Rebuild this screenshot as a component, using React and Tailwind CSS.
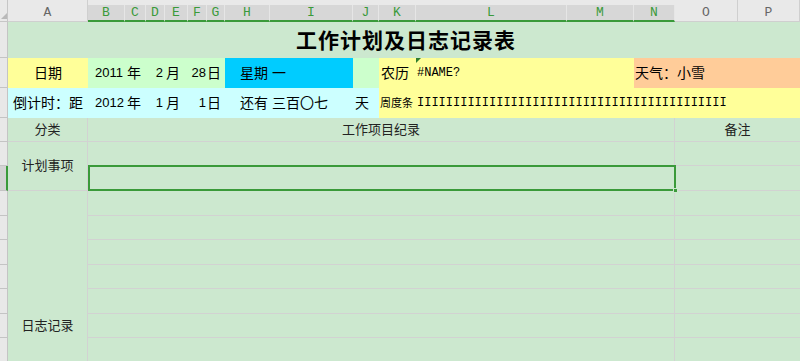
const headers = [
  { k: "A", w: "w-[80px]", sel: false },
  { k: "B", w: "w-[37px]", sel: true },
  { k: "C", w: "w-[21px]", sel: true },
  { k: "D", w: "w-[19px]", sel: true },
  { k: "E", w: "w-[23px]", sel: true },
  { k: "F", w: "w-[19px]", sel: true },
  { k: "G", w: "w-[18px]", sel: true },
  { k: "H", w: "w-[45px]", sel: true },
  { k: "I", w: "w-[83px]", sel: true },
  { k: "J", w: "w-[26px]", sel: true },
  { k: "K", w: "w-[37px]", sel: true },
  { k: "L", w: "w-[151px]", sel: true },
  { k: "M", w: "w-[67px]", sel: true },
  { k: "N", w: "w-[41px]", sel: true },
  { k: "O", w: "w-[63px]", sel: false },
  { k: "P", w: "w-[62px]", sel: false },
];

// row heights of the grey row-number strip (after the column header)
const stripRows = [
  "h-[36px]", "h-[30px]", "h-[30px]", "h-[24px]", "h-[24px]", "h-[25px]",
  "h-[25px]", "h-[24px]", "h-[25px]", "h-[24px]", "h-[25px]", "h-[24px]", "h-[24px]",
];

const logRows = ["h-[25px]", "h-[24px]", "h-[25px]", "h-[24px]", "h-[25px]", "h-[24px]", "h-[24px]"];

const bars = "I".repeat(43);

export default function App() {
  return (
    <div className="w-[800px] h-[361px] overflow-hidden bg-[#cce8cf] text-black font-['Liberation_Sans','Noto_Sans_CJK_SC',sans-serif] flex flex-col">
      {/* COLUMN HEADER */}
      <div className="h-[22px] flex items-end bg-[#e9e9e9] shrink-0">
        <div className="w-[8px] shrink-0 h-full border-r border-b border-[#c6c6c6] flex items-end">
          <div className="w-0 h-0 border-b-[6px] border-b-[#b9b9b9] border-l-[6px] border-l-transparent ml-[1px] mb-[2px]" />
        </div>
        {headers.map((h) =>
          h.sel ? (
            <div
              key={h.k}
              className={`${h.w} shrink-0 h-[17px] bg-[#d7d7d7] border-r border-r-[#e6e6e6] border-b-2 border-b-[#3a9a3a] flex items-center justify-center text-[13px] text-[#3a9a3a] font-['Liberation_Mono',monospace]`}
            >
              {h.k}
            </div>
          ) : (
            <div
              key={h.k}
              className={`${h.w} shrink-0 h-full border-r border-b border-[#cfcfcf] flex items-center justify-center pt-[5px] text-[13px] text-[#666] font-['Liberation_Mono',monospace]`}
            >
              {h.k}
            </div>
          )
        )}
      </div>

      <div className="flex flex-1">
        {/* ROW NUMBER STRIP */}
        <div className="w-[8px] flex flex-col shrink-0">
          {stripRows.map((r, i) =>
            i === 5 ? (
              <div key={i} className={`${r} shrink-0 bg-[#d3d3d3] border-b border-[#c4c4c4] border-r-2 border-r-[#3a9a3a]`} />
            ) : (
              <div key={i} className={`${r} shrink-0 bg-[#e8e8e8] border-b border-r border-[#c4c4c4]`} />
            )
          )}
        </div>

        {/* SHEET */}
        <div className="w-[792px] shrink-0 flex flex-col">
          {/* TITLE */}
          <div className="h-[36px] shrink-0 flex items-center justify-center pl-[4px]">
            <span className="text-[21px] font-bold tracking-[1px] font-['Noto_Sans_CJK_SC',sans-serif]">工作计划及日志记录表</span>
          </div>

          {/* DATE ROW */}
          <div className="h-[30px] shrink-0 flex text-[14px] items-stretch whitespace-nowrap">
            <div className="w-[80px] shrink-0 bg-[#ffff99] flex items-center justify-center">日期</div>
            <div className="w-[137px] shrink-0 bg-[#ccffcc] flex items-center">
              <span className="w-[37px] shrink-0 pl-[7px] text-[13px]">2011</span>
              <span className="w-[21px] shrink-0 pl-[2px]">年</span>
              <span className="w-[19px] shrink-0 text-right pr-[2px] text-[13px]">2</span>
              <span className="w-[23px] shrink-0 pl-[1px]">月</span>
              <span className="w-[19px] shrink-0 text-right pr-[1px] text-[13px]">28</span>
              <span className="w-[18px] shrink-0">日</span>
            </div>
            <div className="w-[128px] shrink-0 bg-[#00ccff] flex items-center pl-[15px]">星期 一</div>
            <div className="w-[26px] shrink-0 bg-[#ccffcc]" />
            <div className="w-[37px] shrink-0 bg-[#ffff99] flex items-center pl-[2px]">农历</div>
            <div className="w-[151px] shrink-0 bg-[#ffff99] relative flex items-center pl-[1px] text-[12px] font-['Liberation_Mono',monospace]">
              <div className="absolute top-0 left-0 w-0 h-0 border-t-[5px] border-t-[#2e7d2e] border-r-[5px] border-r-transparent" />
              #NAME?
            </div>
            <div className="w-[67px] shrink-0 bg-[#ffff99]" />
            <div className="w-[166px] shrink-0 bg-[#ffcc99] flex items-center pl-[1px]">天气：小雪</div>
          </div>

          {/* COUNTDOWN ROW */}
          <div className="h-[30px] shrink-0 flex text-[14px] items-stretch whitespace-nowrap">
            <div className="w-[371px] shrink-0 bg-[#ccffff] flex items-center">
              <span className="w-[80px] shrink-0 pl-[5px]">倒计时：距</span>
              <span className="w-[37px] shrink-0 pl-[7px] text-[13px]">2012</span>
              <span className="w-[21px] shrink-0 pl-[2px]">年</span>
              <span className="w-[19px] shrink-0 text-right pr-[2px] text-[13px]">1</span>
              <span className="w-[23px] shrink-0 pl-[1px]">月</span>
              <span className="w-[19px] shrink-0 text-right pr-[1px] text-[13px]">1</span>
              <span className="w-[18px] shrink-0">日</span>
              <span className="w-[128px] shrink-0 pl-[15px]">还有 三百〇七</span>
              <span className="w-[26px] shrink-0 pl-[2px]">天</span>
            </div>
            <div className="w-[421px] shrink-0 bg-[#ffff99] flex items-center pl-[1px]">
              <span className="text-[11px] w-[37px] shrink-0">周度条</span>
              <span className="text-[12px] font-['Liberation_Mono',monospace]">{bars}</span>
            </div>
          </div>

          {/* HEADINGS */}
          <div className="h-[24px] shrink-0 flex text-[13px] text-[#222] border-b border-[#d2d2d2]">
            <div className="w-[80px] shrink-0 border-r border-[#d2d2d2] flex items-center justify-center">分类</div>
            <div className="w-[587px] shrink-0 border-r border-[#d2d2d2] flex items-center justify-center">工作项目纪录</div>
            <div className="w-[125px] shrink-0 flex items-center justify-center">备注</div>
          </div>

          {/* BODY */}
          <div className="flex flex-1">
            <div className="w-[80px] shrink-0 flex flex-col border-r border-[#d2d2d2] text-[13px] text-[#222]">
              <div className="h-[49px] shrink-0 border-b border-[#d2d2d2] flex items-center justify-center">计划事项</div>
              <div className="flex-1 pt-[127px] text-center leading-[16px]">日志记录</div>
            </div>
            <div className="w-[712px] shrink-0 flex flex-col">
              <div className="h-[24px] shrink-0 flex border-b border-[#d2d2d2]">
                <div className="w-[587px] shrink-0 border-r border-[#d2d2d2]" />
                <div className="w-[125px] shrink-0" />
              </div>
              <div className="h-[25px] shrink-0 flex border-b border-[#d2d2d2]">
                <div className="w-[588px] shrink-0 -mt-[1px] h-[26px] border-2 border-[#3a9a3a] relative">
                  <div className="absolute -right-[4px] -bottom-[4px] w-[5px] h-[5px] bg-[#3a9a3a] border border-[#cce8cf]" />
                </div>
                <div className="w-[124px] shrink-0" />
              </div>
              {logRows.map((r, i) => (
                <div key={i} className={`${r} flex border-b border-[#d2d2d2] shrink-0`}>
                  <div className="w-[587px] shrink-0 border-r border-[#d2d2d2]" />
                  <div className="w-[125px] shrink-0" />
                </div>
              ))}
            </div>
          </div>
        </div>
      </div>
    </div>
  );
}
